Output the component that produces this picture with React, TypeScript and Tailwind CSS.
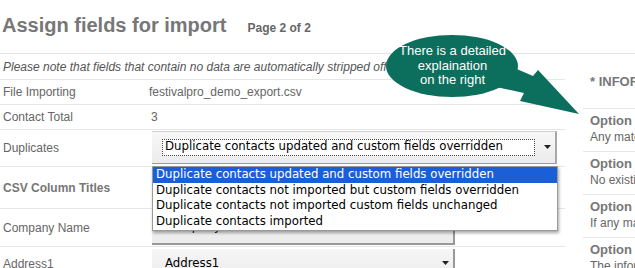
import React from 'react';

const options = [
  'Duplicate contacts updated and custom fields overridden',
  'Duplicate contacts not imported but custom fields overridden',
  'Duplicate contacts not imported custom fields unchanged',
  'Duplicate contacts imported',
];

const info = [
  { title: 'Option 1', text: 'Any matching contacts will be updated' },
  { title: 'Option 2', text: 'No existing contacts will be changed' },
  { title: 'Option 3', text: 'If any matching contacts are found' },
  { title: 'Option 4', text: 'The information will be imported' },
];

function Caret() {
  return (
    <svg width="7" height="4" viewBox="0 0 7 4" className="block">
      <path d="M0 0h7L3.5 4z" fill="#222" />
    </svg>
  );
}

function Row({
  label,
  bold,
  h,
  children,
}: {
  label: string;
  bold?: boolean;
  h: string;
  children?: React.ReactNode;
}) {
  return (
    <div className={`grid grid-cols-[149px_1fr] border-b border-[#e6e6e6] ${h}`}>
      <div className={`flex items-center pl-[3px] ${bold ? 'font-bold text-[#777]' : ''}`}>
        {label}
      </div>
      <div className="flex items-center">{children}</div>
    </div>
  );
}

export default function App() {
  return (
    <div className="relative w-[635px] h-[268px] overflow-hidden bg-white font-['Liberation_Sans',Arial,sans-serif] text-[12px] text-[#666]">
      <div className="flex items-baseline h-[54px] border-b border-[#e3e3e3] pl-[2px] pt-[13px]">
        <h1 className="text-[20px] leading-[24px] font-bold text-[#777]">Assign fields for import</h1>
        <span className="ml-[21px] text-[12px] font-bold text-[#666]">Page 2 of 2</span>
      </div>

      <div className="flex">
        <div className="w-[565px] shrink-0">
          <div className="h-[26px] flex items-center pl-[3px] italic text-[#555] border-b border-[#e6e6e6]">
            Please note that fields that contain no data are automatically stripped off
          </div>
          <Row label="File Importing" h="h-[25px]">festivalpro_demo_export.csv</Row>
          <Row label="Contact Total" h="h-[25px]">
            <span className="pl-[2px]">3</span>
          </Row>
          <Row label="Duplicates" h="h-[37px]">
            <div className="ml-[3px] mb-[2px] w-[405px] h-[33px] flex items-center bg-gradient-to-b from-[#f7f7f7] to-[#ececec] border-t border-[#d0d0d0] border-r-2 border-r-[#a8a8a8] border-b border-b-[#9a9a9a]">
              <div className="ml-[10px] w-[373px] h-[17px] flex items-center border border-dotted border-[#444] bg-white px-[2px] font-['DejaVu_Sans',Verdana,sans-serif] text-[11.75px] text-black">
                {options[0]}
              </div>
              <div className="ml-auto mr-[4px]">
                <Caret />
              </div>
            </div>
          </Row>
          <Row label="CSV Column Titles" bold h="h-[42px]" />
          <Row label="Company Name" h="h-[38px]">
            <div className="ml-[3px] w-[303px] h-[34px] flex items-center pl-[13px] bg-gradient-to-b from-[#f6f6f6] to-[#ececec] border-r-2 border-r-[#999] border-b-2 border-b-[#999] font-['DejaVu_Sans',Verdana,sans-serif] text-[11.75px] text-black">
              Company Name
            </div>
          </Row>
          <div className="grid grid-cols-[149px_1fr] h-[30px]">
            <div className="flex items-start pl-[3px] pt-[8px]">Address1</div>
            <div className="pt-[2px]">
              <div className="ml-[3px] w-[303px] h-[30px] flex items-start pt-[6px] pl-[13px] bg-gradient-to-b from-[#f6f6f6] to-[#ececec] border-r-2 border-r-[#999] font-['DejaVu_Sans',Verdana,sans-serif] text-[11.75px] text-black">
                Address1
                <div className="ml-auto mr-[4px] mt-[6px]">
                  <Caret />
                </div>
              </div>
            </div>
          </div>
        </div>

        <div className="ml-[18px] flex-1 min-w-0 whitespace-nowrap">
          <div className="h-[55px] border-b border-[#e6e6e6] pl-[7px] pt-[18px] font-bold text-[13px] text-[#777]">
            * INFORMATION
          </div>
          {info.map((o) => (
            <div key={o.title} className="h-[43px] border-b border-[#e6e6e6] pl-[7px] pt-[4px] leading-[16px]">
              <div className="font-bold text-[13px] text-[#777]">{o.title}</div>
              <div>{o.text}</div>
            </div>
          ))}
        </div>
      </div>

      {/* dropdown list */}
      <div className="absolute left-[152px] top-[166px] w-[406px] bg-white border border-[#9a9a9a] shadow-[1px_2px_3px_rgba(0,0,0,0.35)] font-['DejaVu_Sans',Verdana,sans-serif] text-[11.75px] text-black">
        {options.map((o, i) => (
          <div
            key={o}
            className={`h-[15.7px] leading-[15.7px] pl-[3px] ${i === 0 ? 'bg-[#1a5fd8] text-white' : ''}`}
          >
            {o}
          </div>
        ))}
      </div>

      {/* callout */}
      <svg className="absolute left-0 top-0 pointer-events-none" width="635" height="268">
        <ellipse cx="452" cy="66" rx="66" ry="31" fill="#0c6e5c" />
        <polygon points="503,63 533,76 538,70 579,114 520,101 524,93 496,87" fill="#0c6e5c" />
      </svg>
      <div className="absolute left-[387px] top-[44px] w-[131px] text-center text-white text-[13px] leading-[14.5px]">
        There is a detailed
        <br />
        explaination
        <br />
        on the right
      </div>
    </div>
  );
}
